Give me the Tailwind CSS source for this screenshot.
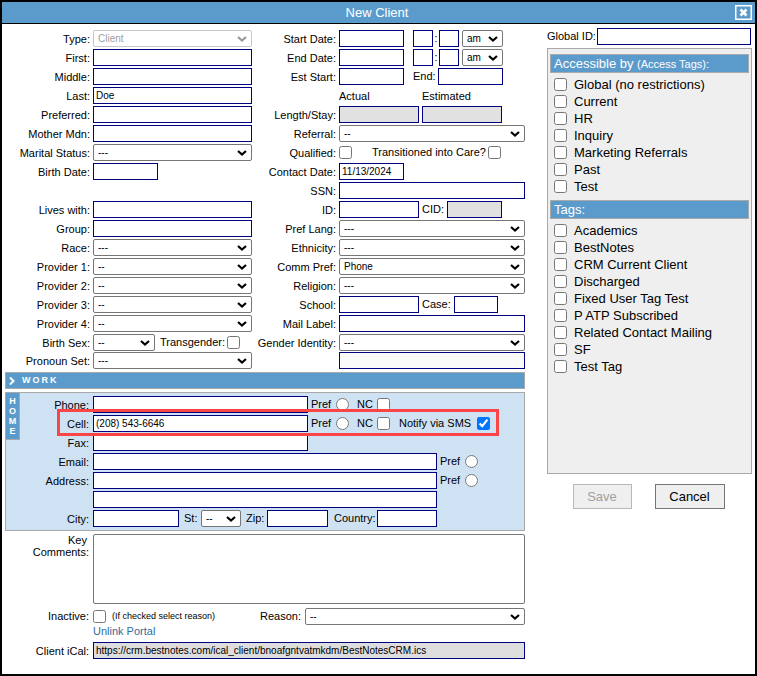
<!DOCTYPE html>
<html lang="en">

<head>
    <meta charset="UTF-8" />
    <meta name="viewport" content="width=device-width, initial-scale=1.0" />
    <title>New Client</title>
    <script src="https://cdn.jsdelivr.net/npm/@tailwindcss/browser@4"></script>
</head>

<body class="min-h-screen flex flex-col border-2 border-black bg-white font-['Liberation_Sans',Arial,sans-serif] text-[11px] leading-[17px] text-black">

    <!-- Title bar -->
    <header class="grid grid-cols-[1fr_auto_1fr] items-center h-[22px] shrink-0 bg-[#5b9bcc] border-b border-black text-white pr-[3px]">
        <h1 class="col-start-2 text-[13px]">New Client</h1>
        <button type="button" aria-label="Close" class="justify-self-end">
            <svg class="w-[17px] h-[15px]" viewBox="0 0 17 15" fill="none">
                <rect x="0.75" y="0.75" width="15.5" height="13.5" stroke="#fff" stroke-width="1.5" />
                <path d="M5.5 4.5l6 6M11.5 4.5l-6 6" stroke="#fff" stroke-width="2.6" />
            </svg>
        </button>
    </header>

    <main class="flex gap-[22px] pl-[3px] pr-[3px] pt-1 whitespace-nowrap
        [&_input[type=text]]:h-[17px] [&_input[type=text]]:border [&_input[type=text]]:border-[#000080] [&_input[type=text]]:px-[2px] [&_input[type=text]]:text-[10px] [&_input[type=text]]:min-w-0
        [&_select]:appearance-none [&_select]:h-[17px] [&_select]:border [&_select]:border-[#767676] [&_select]:rounded-xs [&_select]:bg-white [&_select]:pl-1 [&_select]:text-[10px] [&_select]:leading-[15px] [&_select]:min-w-0
        [&_select]:bg-[url(data:image/svg+xml,%3Csvg%20xmlns=%27http://www.w3.org/2000/svg%27%20width=%2710%27%20height=%276%27%20fill=%27none%27%3E%3Cpath%20d=%27M1%201l4%203.5L9%201%27%20stroke=%27black%27%20stroke-width=%272.2%27/%3E%3C/svg%3E)] [&_select]:bg-no-repeat [&_select]:bg-[position:right_4px_center]">

        <!-- Client form -->
        <form class="flex-1 min-w-0">
            <div class="grid grid-cols-[247fr_273fr] pt-[2px]">
                <div class="grid grid-cols-[85px_1fr] gap-x-[3px] auto-rows-[19px] grid-rows-[repeat(16,19px)_18px_18px] [&>label]:leading-[19px]">
                    <label for="type" class="text-right">Type:</label>
                    <div class="flex items-start"><select id="type" disabled class="w-full opacity-40"><option>Client</option></select></div>
                    <label for="first" class="text-right">First:</label>
                    <div class="flex items-start"><input id="first" type="text" class="w-full" /></div>
                    <label for="middle" class="text-right">Middle:</label>
                    <div class="flex items-start"><input id="middle" type="text" class="w-full" /></div>
                    <label for="last" class="text-right">Last:</label>
                    <div class="flex items-start"><input id="last" type="text" value="Doe" class="w-full" /></div>
                    <label for="preferred" class="text-right">Preferred:</label>
                    <div class="flex items-start"><input id="preferred" type="text" class="w-full" /></div>
                    <label for="mother" class="text-right">Mother Mdn:</label>
                    <div class="flex items-start"><input id="mother" type="text" class="w-full" /></div>
                    <label for="marital" class="text-right">Marital Status:</label>
                    <div class="flex items-start"><select id="marital" class="w-full"><option>---</option></select></div>
                    <label for="birth" class="text-right">Birth Date:</label>
                    <div class="flex items-start"><input id="birth" type="text" class="w-[65px]" /></div>

                    <div class="col-span-2"></div>

                    <label for="lives" class="text-right">Lives with:</label>
                    <div class="flex items-start"><input id="lives" type="text" class="w-full" /></div>
                    <label for="group" class="text-right">Group:</label>
                    <div class="flex items-start"><input id="group" type="text" class="w-full" /></div>
                    <label for="race" class="text-right">Race:</label>
                    <div class="flex items-start"><select id="race" class="w-full"><option>---</option></select></div>
                    <label for="provider1" class="text-right">Provider 1:</label>
                    <div class="flex items-start"><select id="provider1" class="w-full"><option>--</option></select></div>
                    <label for="provider2" class="text-right">Provider 2:</label>
                    <div class="flex items-start"><select id="provider2" class="w-full"><option>--</option></select></div>
                    <label for="provider3" class="text-right">Provider 3:</label>
                    <div class="flex items-start"><select id="provider3" class="w-full"><option>--</option></select></div>
                    <label for="provider4" class="text-right">Provider 4:</label>
                    <div class="flex items-start"><select id="provider4" class="w-full"><option>--</option></select></div>
                    <label for="sex" class="text-right">Birth Sex:</label>
                    <div class="flex items-center h-[17px]">
                        <select id="sex" class="w-[62px]"><option>--</option></select>
                        <label for="trans" class="ml-[5px] mr-[2px]">Transgender:</label>
                        <input id="trans" type="checkbox" class="size-[13px]" />
                    </div>
                    <label for="pronoun" class="text-right">Pronoun Set:</label>
                    <div class="flex items-start"><select id="pronoun" class="w-full"><option>---</option></select></div>
                </div>

                <div class="grid grid-cols-[84px_1fr] gap-x-[3px] auto-rows-[19px] grid-rows-[repeat(16,19px)_18px_18px] [&>label]:leading-[19px]">
                    <label for="start" class="text-right">Start Date:</label>
                    <div class="flex items-start">
                        <input id="start" type="text" class="w-[65px]" />
                        <input type="text" aria-label="Start hour" class="w-5 ml-[9px]" />
                        <span class="w-[6px] text-center">:</span>
                        <input type="text" aria-label="Start minute" class="w-5" />
                        <select aria-label="Start am or pm" class="w-[41px] ml-[3px]"><option>am</option><option>pm</option></select>
                    </div>
                    <label for="end" class="text-right">End Date:</label>
                    <div class="flex items-start">
                        <input id="end" type="text" class="w-[65px]" />
                        <input type="text" aria-label="End hour" class="w-5 ml-[9px]" />
                        <span class="w-[6px] text-center">:</span>
                        <input type="text" aria-label="End minute" class="w-5" />
                        <select aria-label="End am or pm" class="w-[41px] ml-[3px]"><option>am</option><option>pm</option></select>
                    </div>
                    <label for="est-start" class="text-right">Est Start:</label>
                    <div class="flex items-start">
                        <input id="est-start" type="text" class="w-[65px]" />
                        <label for="est-end" class="w-[25px] ml-[9px]">End:</label>
                        <input id="est-end" type="text" class="w-[65px]" />
                    </div>
                    <div class="col-start-2 flex gap-[3px] leading-[19px]">
                        <span class="w-20">Actual</span>
                        <span class="w-20">Estimated</span>
                    </div>
                    <label for="stay" class="text-right">Length/Stay:</label>
                    <div class="flex items-start gap-[3px]">
                        <input id="stay" type="text" readonly class="w-20 bg-[#e1e1e1]" />
                        <input type="text" readonly aria-label="Estimated length of stay" class="w-20 bg-[#e1e1e1]" />
                    </div>
                    <label for="referral" class="text-right">Referral:</label>
                    <div class="flex items-start"><select id="referral" class="w-full"><option>--</option></select></div>
                    <label for="qualified" class="text-right">Qualified:</label>
                    <div class="flex items-center h-[17px]">
                        <input id="qualified" type="checkbox" class="size-[13px]" />
                        <label for="care" class="ml-5 mr-[2px]">Transitioned into Care?</label>
                        <input id="care" type="checkbox" class="size-[13px]" />
                    </div>
                    <label for="contact" class="text-right">Contact Date:</label>
                    <div class="flex items-start"><input id="contact" type="text" value="11/13/2024" class="w-[65px]" /></div>
                    <label for="ssn" class="text-right">SSN:</label>
                    <div class="flex items-start"><input id="ssn" type="text" class="w-full" /></div>
                    <label for="id" class="text-right">ID:</label>
                    <div class="flex items-start gap-[3px]">
                        <input id="id" type="text" class="w-20" />
                        <label for="cid">CID:</label>
                        <input id="cid" type="text" readonly class="w-[55px] bg-[#e1e1e1]" />
                    </div>
                    <label for="lang" class="text-right">Pref Lang:</label>
                    <div class="flex items-start"><select id="lang" class="w-full"><option>---</option></select></div>
                    <label for="ethnicity" class="text-right">Ethnicity:</label>
                    <div class="flex items-start"><select id="ethnicity" class="w-full"><option>---</option></select></div>
                    <label for="comm" class="text-right">Comm Pref:</label>
                    <div class="flex items-start"><select id="comm" class="w-full"><option>Phone</option></select></div>
                    <label for="religion" class="text-right">Religion:</label>
                    <div class="flex items-start"><select id="religion" class="w-full"><option>---</option></select></div>
                    <label for="school" class="text-right">School:</label>
                    <div class="flex items-start gap-[3px]">
                        <input id="school" type="text" class="w-20" />
                        <label for="case">Case:</label>
                        <input id="case" type="text" class="w-11" />
                    </div>
                    <label for="mail" class="text-right">Mail Label:</label>
                    <div class="flex items-start"><input id="mail" type="text" class="w-full" /></div>
                    <label for="gender" class="text-right">Gender Identity:</label>
                    <div class="flex items-start"><select id="gender" class="w-full"><option>---</option></select></div>
                    <div class="col-start-2 flex items-start"><input type="text" aria-label="Gender identity details" disabled class="w-full bg-[#fafafa]" /></div>
                </div>
            </div>

            <!-- Work (collapsed) -->
            <button type="button" class="mt-[2px] flex w-full items-center gap-[7px] h-[17px] border border-[#a9a9a9] bg-[#5b9bcc] pl-[3px] text-[9px] font-bold tracking-[2px] text-white">
                <svg class="w-[6px] h-2" viewBox="0 0 6 8" fill="none" stroke="#fff" stroke-width="2"><path d="M1 0.5L4.5 4L1 7.5" /></svg>
                WORK
            </button>

            <!-- Home -->
            <section class="relative mt-[3px] border border-[#a9a9a9] bg-[#cfe2f3] pt-[3px] pb-[1px] [&_input[type=text]]:bg-white">
                <h2 class="absolute -left-px -top-px flex flex-col items-center w-[15px] h-12 border border-[#a9a9a9] bg-[#5b9bcc] pt-[3px] text-[9px] leading-[10px] font-bold text-white">
                    <span>H</span><span>O</span><span>M</span><span>E</span>
                </h2>
                <div class="grid grid-cols-[83px_1fr] gap-x-1 auto-rows-[19px] [&>label]:leading-[19px]">
                    <label for="phone" class="text-right">Phone:</label>
                    <div class="flex items-center h-[17px]">
                        <input id="phone" type="text" class="w-[215px]" />
                        <label for="phone-pref" class="w-[25px] ml-[3px]">Pref</label>
                        <input id="phone-pref" type="radio" name="phone-pref" class="size-[13px]" />
                        <label for="phone-nc" class="w-5 ml-2">NC</label>
                        <input id="phone-nc" type="checkbox" class="size-[13px]" />
                    </div>
                    <div class="relative col-span-2 grid grid-cols-subgrid [&>label]:leading-[19px]">
                        <label for="cell" class="text-right">Cell:</label>
                        <div class="flex items-center h-[17px]">
                            <input id="cell" type="text" value="(208) 543-6646" class="w-[215px]" />
                            <label for="cell-pref" class="w-[25px] ml-[3px]">Pref</label>
                            <input id="cell-pref" type="radio" name="phone-pref" class="size-[13px]" />
                            <label for="cell-nc" class="w-5 ml-2">NC</label>
                            <input id="cell-nc" type="checkbox" class="size-[13px]" />
                            <label for="sms" class="ml-[9px] mr-[6px]">Notify via SMS</label>
                            <input id="sms" type="checkbox" checked class="size-[13px]" />
                        </div>
                        <div class="pointer-events-none absolute z-10 left-[51px] w-[442px] -top-[6px] h-[27px] border-3 border-[#f94545]"></div>
                    </div>
                    <label for="fax" class="text-right">Fax:</label>
                    <div class="flex items-start"><input id="fax" type="text" class="w-[215px]" /></div>
                    <label for="email" class="text-right">Email:</label>
                    <div class="flex items-center h-[17px]">
                        <input id="email" type="text" class="w-[344px]" />
                        <label for="email-pref" class="w-[25px] ml-[3px]">Pref</label>
                        <input id="email-pref" type="radio" name="mail-pref" class="size-[13px]" />
                    </div>
                    <label for="address" class="text-right">Address:</label>
                    <div class="flex items-center h-[17px]">
                        <input id="address" type="text" class="w-[344px]" />
                        <label for="address-pref" class="w-[25px] ml-[3px]">Pref</label>
                        <input id="address-pref" type="radio" name="mail-pref" class="size-[13px]" />
                    </div>
                    <div class="col-start-2 flex items-start"><input type="text" aria-label="Address line 2" class="w-[344px]" /></div>
                    <label for="city" class="text-right">City:</label>
                    <div class="flex items-start w-[344px]">
                        <input id="city" type="text" class="w-[86px]" />
                        <label for="state" class="w-[17px] ml-[5px]">St:</label>
                        <select id="state" class="w-10"><option>--</option></select>
                        <label for="zip" class="w-[21px] ml-[5px]">Zip:</label>
                        <input id="zip" type="text" class="w-[61px]" />
                        <label for="country" class="w-[43px] ml-[6px]">Country:</label>
                        <input id="country" type="text" class="w-[60px]" />
                    </div>
                </div>
            </section>

            <div class="mt-[3px] grid grid-cols-[84px_1fr] gap-x-1">
                <label for="comments" class="text-right leading-3"><span class="pr-[2px]">Key</span><br />Comments:</label>
                <textarea id="comments" class="block w-full h-[70px] resize-none border border-[#767676] rounded-xs"></textarea>
            </div>
            <div class="mt-1 grid grid-cols-[84px_1fr] gap-x-1">
                <label for="inactive" class="text-right">Inactive:</label>
                <div class="flex items-center">
                    <input id="inactive" type="checkbox" class="size-[13px]" />
                    <span class="ml-[6px] text-[9px]">(If checked select reason)</span>
                    <label for="reason" class="ml-auto mr-1">Reason:</label>
                    <select id="reason" class="w-[220px]"><option>--</option></select>
                </div>
                <a href="#" class="col-start-2 justify-self-start leading-[13px] text-[#336b9b]">Unlink Portal</a>
                <label for="ical" class="mt-1 text-right leading-[19px]">Client iCal:</label>
                <input id="ical" type="text" readonly value="https://crm.bestnotes.com/ical_client/bnoafgntvatmkdm/BestNotesCRM.ics" class="mt-1 w-full bg-[#dedede]" />
            </div>
        </form>

        <!-- Tags sidebar -->
        <aside class="w-[205px] shrink-0">
            <div class="flex items-center pr-px">
                <label for="global-id" class="w-[50px]">Global ID:</label>
                <input id="global-id" type="text" class="flex-1" />
            </div>
            <div class="mt-[3px] h-[426px] border border-[#a9a9a9] bg-[#efefef] px-[2px] pt-[5px] text-[13px]">
                <h2 class="h-[19px] border border-[#a9a9a9] bg-[#5b9bcc] pl-[3px] text-white">Accessible by <span class="text-[11px]">(Access Tags):</span></h2>
                <div class="pt-[3px] pb-[5px] [&_label]:flex [&_label]:items-center [&_label]:gap-[7px] [&_label]:pl-1 [&_input]:size-[13px]">
                    <label><input type="checkbox" />Global (no restrictions)</label>
                    <label><input type="checkbox" />Current</label>
                    <label><input type="checkbox" />HR</label>
                    <label><input type="checkbox" />Inquiry</label>
                    <label><input type="checkbox" />Marketing Referrals</label>
                    <label><input type="checkbox" />Past</label>
                    <label><input type="checkbox" />Test</label>
                </div>
                <h2 class="h-[19px] border border-[#a9a9a9] bg-[#5b9bcc] pl-[3px] text-white">Tags:</h2>
                <div class="pt-[3px] [&_label]:flex [&_label]:items-center [&_label]:gap-[7px] [&_label]:pl-1 [&_input]:size-[13px]">
                    <label><input type="checkbox" />Academics</label>
                    <label><input type="checkbox" />BestNotes</label>
                    <label><input type="checkbox" />CRM Current Client</label>
                    <label><input type="checkbox" />Discharged</label>
                    <label><input type="checkbox" />Fixed User Tag Test</label>
                    <label><input type="checkbox" />P ATP Subscribed</label>
                    <label><input type="checkbox" />Related Contact Mailing</label>
                    <label><input type="checkbox" />SF</label>
                    <label><input type="checkbox" />Test Tag</label>
                </div>
            </div>
            <div class="mt-[10px] flex justify-center gap-[23px] pr-[2px] text-[13px]">
                <button type="button" disabled class="w-[59px] h-[25px] border border-[#b8b8b8] bg-[#efefef] text-[#a0a0a0]">Save</button>
                <button type="button" class="w-[70px] h-[25px] border border-[#767676] bg-[#efefef]">Cancel</button>
            </div>
        </aside>
    </main>

</body>

</html>
